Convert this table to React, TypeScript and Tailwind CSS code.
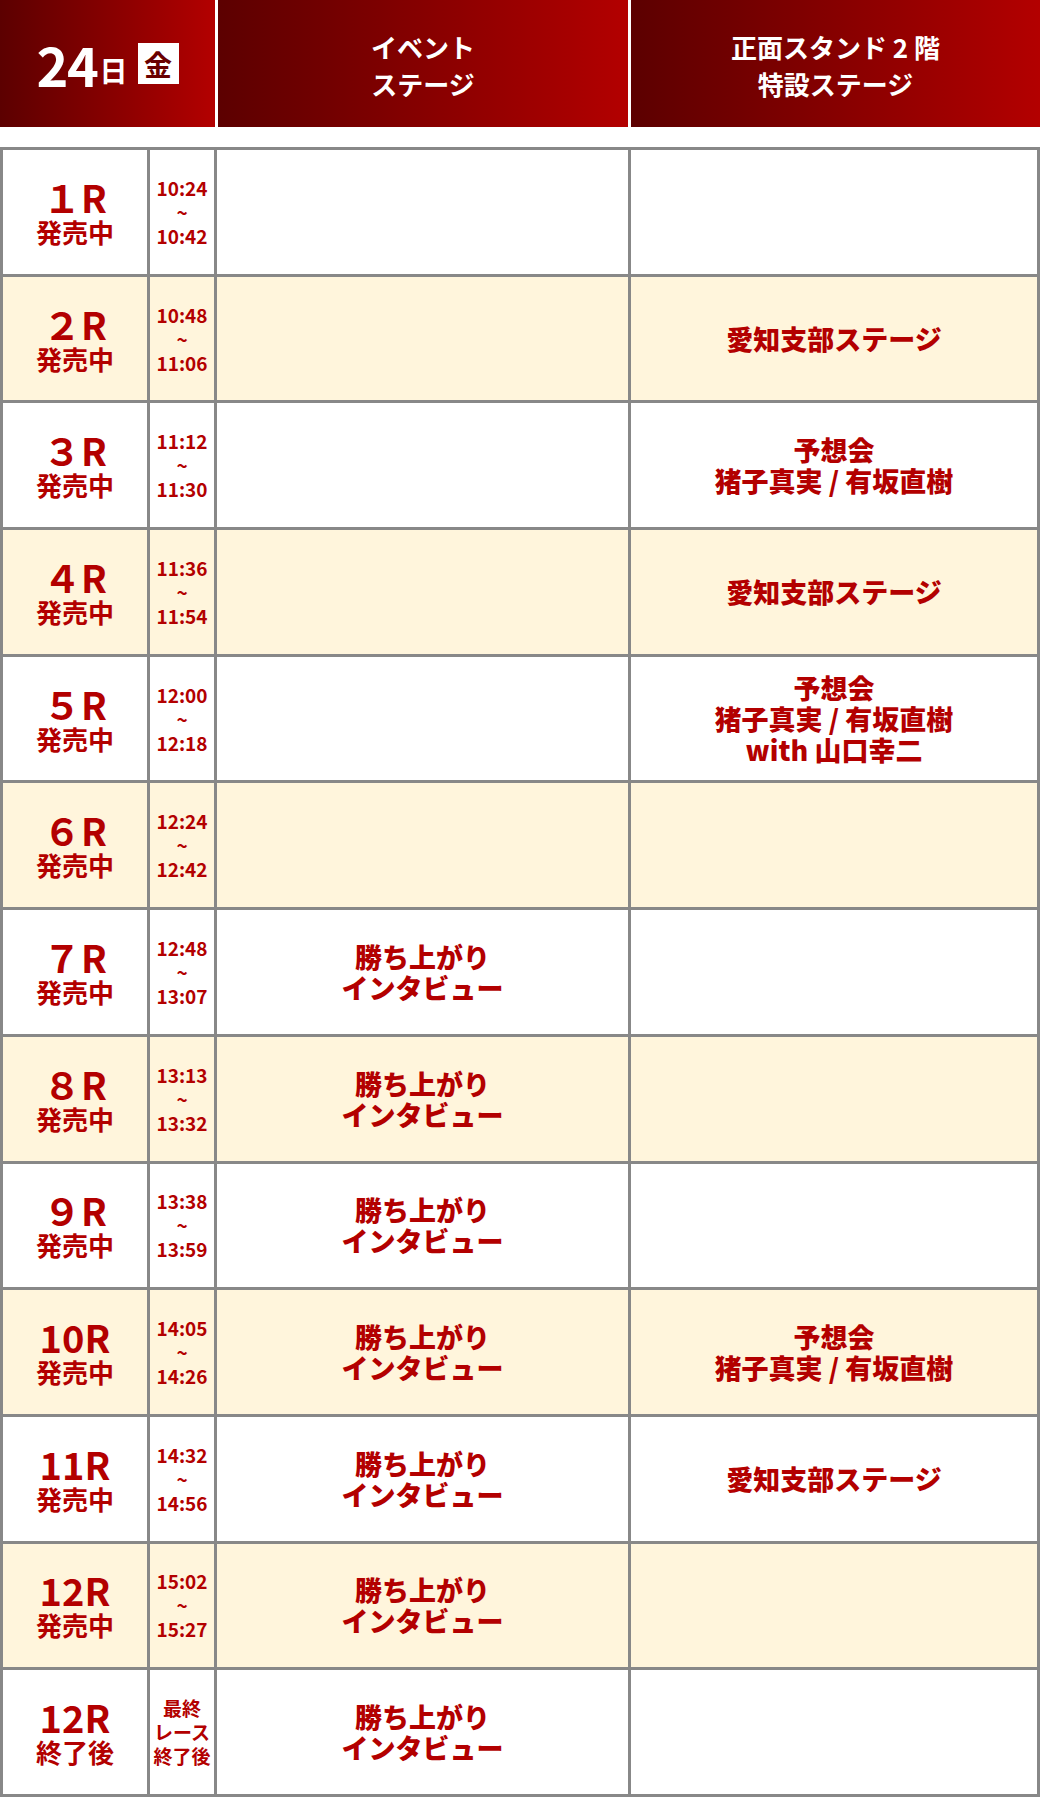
import React from 'react';

type Row = {
    race: string;
    status: string;
    time: string[];
    event?: string[];
    stand?: string[];
};

const INTERVIEW = ['勝ち上がり', 'インタビュー'];
const AICHI = ['愛知支部ステージ'];
const YOSO = ['予想会', '猪子真実 / 有坂直樹'];

const ROWS: Row[] = [
    { race: '１R', status: '発売中', time: ['10:24', '~', '10:42'] },
    { race: '２R', status: '発売中', time: ['10:48', '~', '11:06'], stand: AICHI },
    { race: '３R', status: '発売中', time: ['11:12', '~', '11:30'], stand: YOSO },
    { race: '４R', status: '発売中', time: ['11:36', '~', '11:54'], stand: AICHI },
    { race: '５R', status: '発売中', time: ['12:00', '~', '12:18'], stand: [...YOSO, 'with 山口幸二'] },
    { race: '６R', status: '発売中', time: ['12:24', '~', '12:42'] },
    { race: '７R', status: '発売中', time: ['12:48', '~', '13:07'], event: INTERVIEW },
    { race: '８R', status: '発売中', time: ['13:13', '~', '13:32'], event: INTERVIEW },
    { race: '９R', status: '発売中', time: ['13:38', '~', '13:59'], event: INTERVIEW },
    { race: '10R', status: '発売中', time: ['14:05', '~', '14:26'], event: INTERVIEW, stand: YOSO },
    { race: '11R', status: '発売中', time: ['14:32', '~', '14:56'], event: INTERVIEW, stand: AICHI },
    { race: '12R', status: '発売中', time: ['15:02', '~', '15:27'], event: INTERVIEW },
    { race: '12R', status: '終了後', time: ['最終', 'レース', '終了後'], event: INTERVIEW },
];

const Lines: React.FC<{ lines?: string[] }> = ({ lines }) => (
    <>
        {lines?.map((l, i) => (
            <span key={i} className="block">{l}</span>
        ))}
    </>
);

export default function App() {
    return (
        <div className="w-[1040px] bg-white text-[#b30000] font-bold" style={{ fontFamily: '"Noto Sans CJK JP", "Noto Sans", sans-serif' }}>
            {/* HEADER */}
            <div className="flex h-[127px] gap-[3px] text-white">
                <div className="w-[215px] flex items-center justify-center bg-gradient-to-r from-[#5c0000] to-[#b30000]">
                    <span className="text-[54px] leading-none tracking-tight">24</span>
                    <span className="text-[28px] leading-none mt-[12px] ml-[2px]">日</span>
                    <span className="ml-[10px] w-[41px] h-[41px] bg-white text-[#6a0000] text-[28px] leading-none flex items-center justify-center">金</span>
                </div>
                <div className="w-[410px] flex flex-col items-center justify-center pt-[3px] text-[26px] leading-[37px] text-center bg-gradient-to-r from-[#5c0000] to-[#b30000]">
                    <span>イベント</span>
                    <span>ステージ</span>
                </div>
                <div className="flex-1 flex flex-col items-center justify-center pt-[3px] text-[26px] leading-[37px] text-center bg-gradient-to-r from-[#5c0000] to-[#b30000]">
                    <span>正面スタンド 2 階</span>
                    <span>特設ステージ</span>
                </div>
            </div>

            {/* TABLE */}
            <div className="mt-[20px] grid grid-cols-[144px_64px_411px_406px] auto-rows-[123.7px] gap-[3px] p-[3px] bg-[#888888]">
                {ROWS.map((row, idx) => {
                    const bg = idx % 2 === 1 ? 'bg-[#fff5dc]' : 'bg-white';
                    return (
                        <React.Fragment key={idx}>
                            <div className={`${bg} flex flex-col items-center justify-center text-center pb-[4px]`}>
                                <span className="text-[38px] leading-[44px]">{row.race}</span>
                                <span className="text-[26px] leading-[26px]">{row.status}</span>
                            </div>
                            <div className={`${bg} flex flex-col items-center justify-center text-center text-[19px] leading-[24px]`}>
                                <Lines lines={row.time} />
                            </div>
                            <div className={`${bg} flex flex-col items-center justify-center text-center text-[27px] leading-[31px] font-black`}>
                                <Lines lines={row.event} />
                            </div>
                            <div className={`${bg} flex flex-col items-center justify-center text-center text-[27px] leading-[31px] font-black`}>
                                <Lines lines={row.stand} />
                            </div>
                        </React.Fragment>
                    );
                })}
            </div>
        </div>
    );
}
